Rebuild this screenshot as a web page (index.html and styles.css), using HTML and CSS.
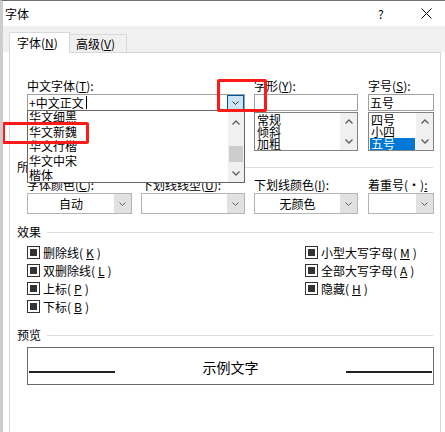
FILE: index.html
```html
<!DOCTYPE html>
<html lang="zh-CN">
<head>
    <meta charset="UTF-8">
    <title>字体</title>
    <link rel="stylesheet" href="styles.css">
</head>
<body>
<div class="dialog">
    <div class="titlebar">
        <span class="title">字体</span>
        <span class="help">?</span>
        <svg class="close" width="11" height="11" viewBox="0 0 11 11"><path d="M0.5 0.5L10.5 10.5M10.5 0.5L0.5 10.5"/></svg>
    </div>

    <div class="tabs">
        <div class="tab active">字体(<u>N</u>)</div>
        <div class="tab idle">高级(<u>V</u>)</div>
    </div>

    <div class="panel">
        <!-- font / style / size -->
        <div class="font-row">
            <div class="field">
                <div class="label">中文字体(<u>T</u>):</div>
                <div class="edit wide">
                    <span>+中文正文</span><span class="caret"></span>
                    <span class="drop hot"><svg width="7" height="4" viewBox="0 0 7 4"><path d="M0.5 0.5L3.5 3.5L6.5 0.5"/></svg></span>
                </div>
            </div>
            <div class="field">
                <div class="label">字形(<u>Y</u>):</div>
                <div class="edit style-w"></div>
                <div class="list style-w">
                    <ul class="items">
                        <li>常规</li>
                        <li>倾斜</li>
                        <li>加粗</li>
                    </ul>
                    <div class="vscroll">
                        <span class="arrow"><svg width="8" height="5" viewBox="0 0 8 5"><path d="M0.5 4.5L4 1L7.5 4.5"/></svg></span>
                        <span class="arrow"><svg width="8" height="5" viewBox="0 0 8 5"><path d="M0.5 0.5L4 4L7.5 0.5"/></svg></span>
                    </div>
                </div>
            </div>
            <div class="field">
                <div class="label">字号(<u>S</u>):</div>
                <div class="edit size-w">五号</div>
                <div class="list size-w">
                    <ul class="items">
                        <li>四号</li>
                        <li>小四</li>
                        <li class="sel">五号</li>
                    </ul>
                    <div class="vscroll">
                        <span class="arrow"><svg width="8" height="5" viewBox="0 0 8 5"><path d="M0.5 4.5L4 1L7.5 4.5"/></svg></span>
                        <span class="arrow"><svg width="8" height="5" viewBox="0 0 8 5"><path d="M0.5 0.5L4 4L7.5 0.5"/></svg></span>
                    </div>
                </div>
            </div>
        </div>

        <!-- all text -->
        <div class="group-head all-text"><span>所有文字</span><i></i></div>
        <div class="combo-row">
            <div class="field">
                <div class="label">字体颜色(<u>C</u>):</div>
                <div class="combo c105"><span class="val">自动</span><span class="drop"><svg width="7" height="4" viewBox="0 0 7 4"><path d="M0.5 0.5L3.5 3.5L6.5 0.5"/></svg></span></div>
            </div>
            <div class="field">
                <div class="label">下划线线型(<u>U</u>):</div>
                <div class="combo c104"><span class="val"></span><span class="drop"><svg width="7" height="4" viewBox="0 0 7 4"><path d="M0.5 0.5L3.5 3.5L6.5 0.5"/></svg></span></div>
            </div>
            <div class="field">
                <div class="label">下划线颜色(<u>I</u>):</div>
                <div class="combo c104"><span class="val">无颜色</span><span class="drop"><svg width="7" height="4" viewBox="0 0 7 4"><path d="M0.5 0.5L3.5 3.5L6.5 0.5"/></svg></span></div>
            </div>
            <div class="field">
                <div class="label">着重号(・)<u>:</u></div>
                <div class="combo c66"><span class="val"></span><span class="drop"><svg width="7" height="4" viewBox="0 0 7 4"><path d="M0.5 0.5L3.5 3.5L6.5 0.5"/></svg></span></div>
            </div>
        </div>

        <!-- effects -->
        <div class="group-head effects-head"><span>效果</span><i></i></div>
        <div class="effects">
            <div class="fx-col">
                <label class="check"><span class="box"></span>删除线(<u>K</u>)</label>
                <label class="check"><span class="box"></span>双删除线(<u>L</u>)</label>
                <label class="check"><span class="box"></span>上标(<u>P</u>)</label>
                <label class="check"><span class="box"></span>下标(<u>B</u>)</label>
            </div>
            <div class="fx-col">
                <label class="check"><span class="box"></span>小型大写字母(<u>M</u>)</label>
                <label class="check"><span class="box"></span>全部大写字母(<u>A</u>)</label>
                <label class="check"><span class="box"></span>隐藏(<u>H</u>)</label>
            </div>
        </div>

        <!-- preview -->
        <div class="group-head preview-head"><span>预览</span><i></i></div>
        <div class="preview">
            <span class="rule"></span>
            <span class="sample">示例文字</span>
            <span class="rule"></span>
        </div>

        <!-- open font dropdown -->
        <div class="popup">
            <ul class="popup-items">
                <li>华文细黑</li>
                <li>华文新魏</li>
                <li>华文行楷</li>
                <li>华文中宋</li>
                <li>楷体</li>
            </ul>
            <div class="vscroll tall">
                <span class="arrow"><svg width="8" height="5" viewBox="0 0 8 5"><path d="M0.5 4.5L4 1L7.5 4.5"/></svg></span>
                <span class="track"><span class="thumb"></span></span>
                <span class="arrow"><svg width="8" height="5" viewBox="0 0 8 5"><path d="M0.5 0.5L4 4L7.5 0.5"/></svg></span>
            </div>
        </div>
    </div>

    <!-- red highlight marks -->
    <div class="mark mark-btn"></div>
    <div class="mark mark-item"></div>
</div>
</body>
</html>
```

FILE: styles.css
```css
* {
    box-sizing: border-box;
}
body {
    margin: 0;
    background: #fff;
    font-family: "Noto Sans CJK SC", sans-serif;
    font-size: 12px;
    color: #000;
}
ul {
    list-style: none;
    margin: 0;
    padding: 0;
}
u {
    text-underline-offset: 1px;
}
.dialog {
    position: relative;
    width: 445px;
    height: 432px;
    border-top: 1px solid #6e6e6e;
    border-left: 3px solid #cdcdcd;
    overflow: hidden;
}

/* title bar */
.titlebar {
    height: 25px;
    display: flex;
    align-items: center;
    padding-left: 2px;
}
.title {
    flex: 1;
    line-height: 14px;
}
.help {
    width: 8px;
    margin-right: 35px;
    line-height: 14px;
}
.close {
    margin-right: 13px;
}
.close path {
    stroke: #000;
    stroke-width: 1;
    fill: none;
}

/* tabs */
.tabs {
    height: 26px;
    background: #f0f0f0;
    display: flex;
    align-items: flex-end;
    padding-left: 6px;
}
.tab {
    line-height: 14px;
    border: 1px solid #d9d9d9;
    border-bottom: none;
}
.tab.active {
    position: relative;
    z-index: 1;
    width: 61px;
    height: 21px;
    margin-bottom: -1px;
    padding: 3px 0 0 7px;
    background: #fff;
}
.tab.idle {
    width: 57px;
    height: 18px;
    border-left: none;
    padding: 2px 0 0 6px;
}

/* tab page */
.panel {
    position: relative;
    height: 380px;
    margin: 0 4px 0 6px;
    padding: 26px 7px 0;
    border: 1px solid #d9d9d9;
    border-bottom: none;
    background: #fff;
}
.label {
    line-height: 14px;
    height: 14px;
    margin-bottom: 1px;
    white-space: nowrap;
}
.font-row {
    margin-left: 10px;
    display: grid;
    grid-template-columns: 227px 114px 66px;
    height: 72px;
}
.edit {
    height: 17px;
    border: 1px solid #a0a0a0;
    line-height: 15px;
    padding-left: 1px;
    display: flex;
    align-items: center;
}
.edit.wide {
    width: 218px;
}
.style-w {
    width: 104px;
}
.size-w {
    width: 66px;
}
.caret {
    width: 1px;
    height: 13px;
    background: #000;
    margin-left: 2px;
}
.drop {
    display: flex;
    align-items: center;
    justify-content: center;
    margin-left: auto;
    width: 17px;
    height: 100%;
}
.drop path {
    stroke: #606060;
    stroke-width: 1;
    fill: none;
}
.drop.hot {
    height: 15px;
    width: 17px;
    background: #cce4f7;
    border: 1px solid #005499;
}
.drop.hot path {
    stroke: #333;
}

/* list boxes */
.list {
    margin-top: 1px;
    height: 39px;
    border: 1px solid #828282;
    display: flex;
}
.items {
    flex: 1;
    padding: 1px 1px 0;
    line-height: 12px;
}
.items li {
    height: 12px;
    padding-left: 1px;
    white-space: nowrap;
}
.items li.sel {
    background: #0078d7;
    color: #fff;
}
.vscroll {
    width: 17px;
    background: #f0f0f0;
    display: flex;
    flex-direction: column;
    justify-content: space-between;
}
.vscroll .arrow {
    height: 17px;
    display: flex;
    align-items: center;
    justify-content: center;
}
.vscroll path {
    stroke: #606060;
    stroke-width: 1.4;
    fill: none;
}

/* section headings */
.group-head {
    display: flex;
    align-items: center;
    gap: 6px;
    line-height: 14px;
    height: 14px;
}
.group-head i {
    flex: 1;
    height: 1px;
    background: #dcdcdc;
}
.all-text {
    margin-top: 9px;
}
.effects-head {
    margin-top: 11px;
}
.preview-head {
    margin-top: 13px;
}

/* colour / underline combos */
.combo-row {
    margin: 4px 0 0 10px;
    display: grid;
    grid-template-columns: 114px 113px 114px 66px;
}
.combo {
    height: 21px;
    border: 1px solid #b4b4b4;
    display: flex;
}
.combo .val {
    flex: 1;
    text-align: center;
    line-height: 19px;
}
.combo .drop {
    background: #e1e1e1;
}
.c105 {
    width: 105px;
}
.c104 {
    width: 104px;
}
.c66 {
    width: 66px;
}

/* effects */
.effects {
    margin: 4px 0 0 10px;
    display: grid;
    grid-template-columns: 278px 1fr;
}
.fx-col {
    display: flex;
    flex-direction: column;
}
.check {
    height: 18px;
    display: flex;
    align-items: center;
    gap: 3px;
    white-space: nowrap;
}
.box {
    width: 13px;
    height: 13px;
    border: 1px solid #333;
    padding: 2px;
}
.box::after {
    content: "";
    display: block;
    width: 7px;
    height: 7px;
    background: #333;
}

/* preview */
.preview {
    margin: 5px 0 0 10px;
    width: 407px;
    height: 38px;
    border: 1px solid #6b6b6b;
    display: flex;
    align-items: center;
    justify-content: space-between;
    padding: 0 1px;
}
.rule {
    width: 86px;
    height: 2px;
    margin-top: 11px;
    background: #222;
}
.sample {
    font-size: 14px;
    line-height: 16px;
    margin-top: 1px;
}

/* font dropdown */
.popup {
    position: absolute;
    z-index: 5;
    left: 17px;
    top: 57px;
    width: 218px;
    height: 73px;
    border: 1px solid #646464;
    background: #fff;
    display: flex;
    overflow: hidden;
}
.popup-items {
    flex: 1;
    margin-top: -1px;
    padding-left: 1px;
    line-height: 14.6px;
}
.vscroll.tall {
    width: 16px;
    padding-top: 3px;
    justify-content: flex-start;
}
.vscroll .track {
    flex: 1;
}
.vscroll .thumb {
    display: block;
    margin: 15px 0 0 1px;
    width: 14px;
    height: 16px;
    background: #cdcdcd;
}

/* red marks */
.mark {
    position: absolute;
    z-index: 10;
    border: 3px solid #ff1a1a;
    border-radius: 2px;
}
.mark-btn {
    left: 214px;
    top: 78px;
    width: 50px;
    height: 33px;
}
.mark-item {
    left: -1px;
    top: 121px;
    width: 87px;
    height: 22px;
}
```
